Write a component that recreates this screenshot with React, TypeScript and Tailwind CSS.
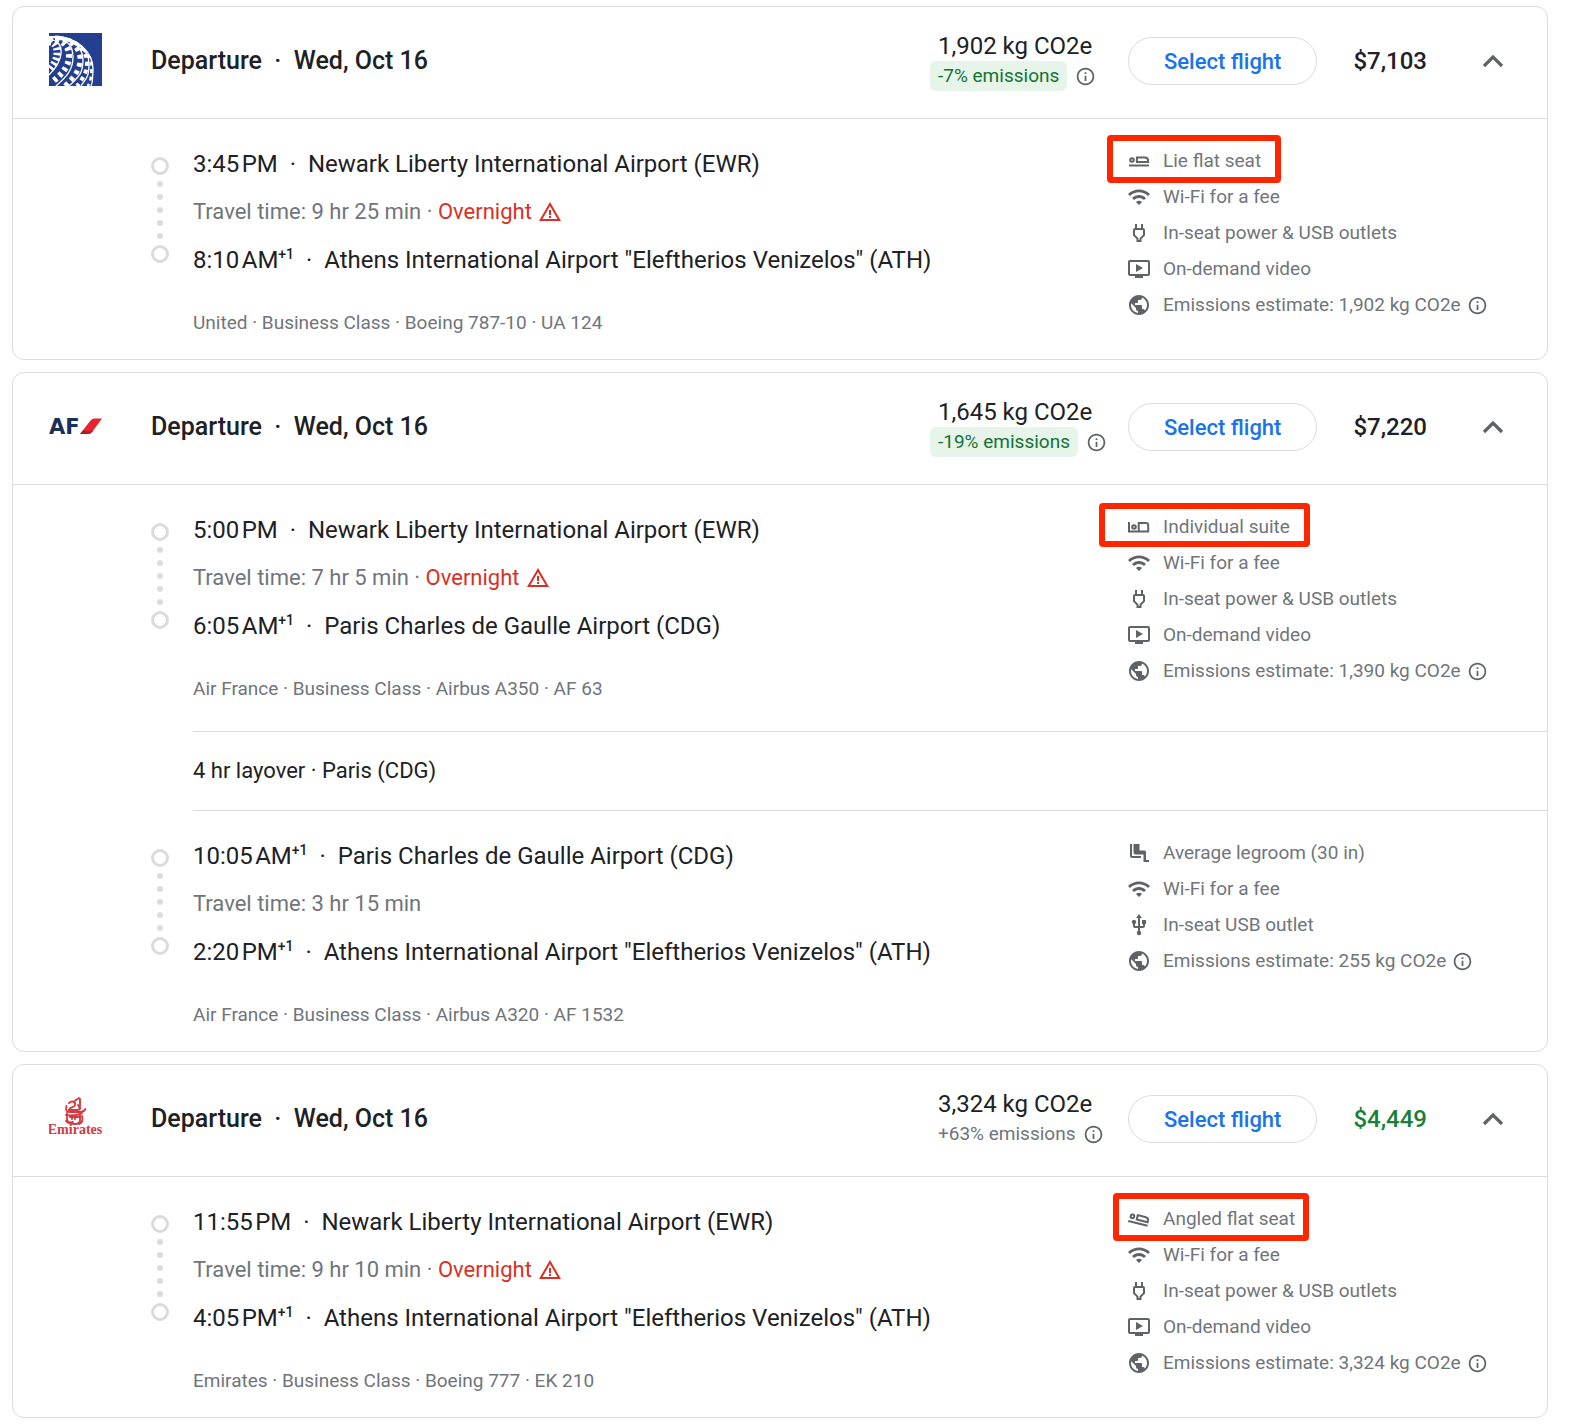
import type { ReactNode } from "react";
import {
  MdInfoOutline,
  MdOndemandVideo,
  MdOutlinePower,
  MdPublic,
  MdUsb,
  MdWarningAmber,
  MdWifi,
} from "react-icons/md";
import clsx from "clsx";

type AmenityKind = "lieFlat" | "suite" | "angled" | "legroom" | "wifi" | "power" | "usb" | "video" | "emissions";

interface Amenity {
  kind: AmenityKind;
  label: string;
  highlight?: string;
}

interface Stop {
  time: string;
  nextDay?: boolean;
  airport: string;
}

interface Leg {
  from: Stop;
  to: Stop;
  duration: string;
  overnight?: boolean;
  details: string[];
  amenities: Amenity[];
  layover?: string;
}

interface Flight {
  id: string;
  airline: string;
  logo: ReactNode;
  co2: string;
  delta: string;
  lowEmissions: boolean;
  price: string;
  deal?: boolean;
  legs: Leg[];
}

function UnitedLogo() {
  return (
    <svg viewBox="0 0 53 53" className="size-[53px]" role="img" aria-label="United">
      <rect width="53" height="53" fill="#243f8f" />
      <g fill="none" stroke="#fff">
        {/* meridians */}
        <g strokeWidth="1.3">
          <path d="M0 7C8 6 13 12 12 21S6 36 0 42" />
          <path d="M0 5C14 3 24 10 24 24S16 45 7 53" />
          <path d="M2 4C20 3 34 12 34 27S28 45 20 53" />
          <path d="M6 4C26 4 40 16 40 31S36 46 32 53" />
          <path d="M3 4C28 2 45 20 44 38S43 48 42 53" />
        </g>
        {/* blocks between the meridians */}
        <path d="M0 9C5 9 8 13 8 20S4 33 0 37" strokeWidth="7" strokeDasharray="2.500 2.500" />
        <path d="M0 6C12 5 20 12 20 23S12 42 3 49" strokeWidth="6" strokeDasharray="3.500 3.500" />
        <path d="M6 5C20 5 31 14 31 26S24 45 16 53" strokeWidth="5" strokeDasharray="4 4" />
        <path d="M10 5C26 6 38 17 38 29S33 46 28 53" strokeWidth="4" strokeDasharray="4 4" />
        <path d="M14 6C30 8 43 22 42.500 36S40 49 39 53" strokeWidth="2.500" strokeDasharray="4 3.500" />
      </g>
    </svg>
  );
}

function AirFranceLogo() {
  return (
    <svg viewBox="0 0 53 53" className="size-[53px]" role="img" aria-label="Air France">
      <text x="0" y="35" fontFamily="'DejaVu Sans', sans-serif" fontWeight="700" fontSize="21" fill="#1b2f5b">
        AF
      </text>
      <path d="M31 35 41.500 21.500Q43 19.500 45.500 19.500H53L43.500 32.500Q41.800 35 38.500 35Z" fill="#e8252f" />
      <path d="M31 35 34 31.200Q40 33.500 44.400 31.300L43.500 32.500Q41.800 35 38.500 35Z" fill="#a91f26" />
    </svg>
  );
}

function EmiratesLogo() {
  return (
    <svg viewBox="0 0 53 53" className="size-[53px]" role="img" aria-label="Emirates">
      <g fill="none" stroke="#d83a41" strokeWidth="1.900" strokeLinecap="round">
        <path d="M26 9.500c1.500-1 3-1 4-2.500M31 8v10M20 12c3-3 7-1 6 2s-6 2-6 5h9c2 0 2-2 0-5" />
        <path d="M17.500 15c-1 4 0 6 3 6h10c3 0 5-1 6-3" />
        <path d="M17 24c4 1 14 0 16-2M18 22v6c0 3 3 4 6 3M21 26h9M23 24v4M26 24v4M31 22v7c0 3-2 4-5 4s-7 0-9-3M33 25c1 4 0 7-3 8" />
      </g>
      <text
        x="26"
        y="43"
        textAnchor="middle"
        fontFamily="'Liberation Serif', serif"
        fontWeight="700"
        fontSize="14"
        fill="#d83a41"
      >
        Emirates
      </text>
    </svg>
  );
}

function SeatIcon({ kind }: { kind: AmenityKind }) {
  if (kind === "legroom") {
    return (
      <svg viewBox="0 0 24 24" className="size-6" fill="currentColor" aria-hidden="true">
        <path d="M3 3h2v12h9v2H5a2 2 0 0 1-2-2z" />
        <path d="M6.500 3h6v6.500h5a1.500 1.500 0 0 1 1.500 1.500v8h3v2h-5.500v-7.500h-8a2 2 0 0 1-2-2z" />
      </svg>
    );
  }
  if (kind === "suite") {
    return (
      <svg viewBox="0 0 24 24" className="size-6" fill="none" stroke="currentColor" strokeWidth="2" aria-hidden="true">
        <path d="M2 7v9.600h19.200V10q0-2-2-2h-7.500v8.500" />
        <circle cx="7" cy="12" r="1.800" />
      </svg>
    );
  }
  return (
    <svg viewBox="0 0 24 24" className="size-6" fill="none" stroke="currentColor" strokeWidth="2" aria-hidden="true">
      <g transform={kind === "angled" ? "rotate(14 12 12)" : undefined}>
        <path d="M2 16.500h20M9.900 13V8.500h7.600q3.600 0 3.600 3.200V13z" />
        <circle cx="5" cy="11" r="1.800" />
      </g>
    </svg>
  );
}

function AmenityIcon({ kind }: { kind: AmenityKind }) {
  switch (kind) {
    case "wifi":
      return <MdWifi className="size-6" />;
    case "power":
      return <MdOutlinePower className="size-6" />;
    case "usb":
      return <MdUsb className="size-6" />;
    case "video":
      return <MdOndemandVideo className="size-6" />;
    case "emissions":
      return <MdPublic className="size-6" />;
    default:
      return <SeatIcon kind={kind} />;
  }
}

const EWR = "Newark Liberty International Airport (EWR)";
const ATH = 'Athens International Airport "Eleftherios Venizelos" (ATH)';
const CDG = "Paris Charles de Gaulle Airport (CDG)";

const WIFI: Amenity = { kind: "wifi", label: "Wi-Fi for a fee" };
const POWER: Amenity = { kind: "power", label: "In-seat power & USB outlets" };
const VIDEO: Amenity = { kind: "video", label: "On-demand video" };

const FLIGHTS: Flight[] = [
  {
    id: "ua",
    airline: "United",
    logo: <UnitedLogo />,
    co2: "1,902 kg CO2e",
    delta: "-7% emissions",
    lowEmissions: true,
    price: "$7,103",
    legs: [
      {
        from: { time: "3:45 PM", airport: EWR },
        to: { time: "8:10 AM", nextDay: true, airport: ATH },
        duration: "9 hr 25 min",
        overnight: true,
        details: ["United", "Business Class", "Boeing 787-10", "UA 124"],
        amenities: [
          { kind: "lieFlat", label: "Lie flat seat", highlight: "-left-5 -right-5 -top-2 -bottom-1" },
          WIFI,
          POWER,
          VIDEO,
          { kind: "emissions", label: "Emissions estimate: 1,902 kg CO2e" },
        ],
      },
    ],
  },
  {
    id: "af",
    airline: "Air France",
    logo: <AirFranceLogo />,
    co2: "1,645 kg CO2e",
    delta: "-19% emissions",
    lowEmissions: true,
    price: "$7,220",
    legs: [
      {
        from: { time: "5:00 PM", airport: EWR },
        to: { time: "6:05 AM", nextDay: true, airport: CDG },
        duration: "7 hr 5 min",
        overnight: true,
        details: ["Air France", "Business Class", "Airbus A350", "AF 63"],
        layover: "4 hr layover · Paris (CDG)",
        amenities: [
          { kind: "suite", label: "Individual suite", highlight: "-left-7 -right-5 -top-1.5 -bottom-0.5" },
          WIFI,
          POWER,
          VIDEO,
          { kind: "emissions", label: "Emissions estimate: 1,390 kg CO2e" },
        ],
      },
      {
        from: { time: "10:05 AM", nextDay: true, airport: CDG },
        to: { time: "2:20 PM", nextDay: true, airport: ATH },
        duration: "3 hr 15 min",
        details: ["Air France", "Business Class", "Airbus A320", "AF 1532"],
        amenities: [
          { kind: "legroom", label: "Average legroom (30 in)" },
          WIFI,
          { kind: "usb", label: "In-seat USB outlet" },
          { kind: "emissions", label: "Emissions estimate: 255 kg CO2e" },
        ],
      },
    ],
  },
  {
    id: "ek",
    airline: "Emirates",
    logo: <EmiratesLogo />,
    co2: "3,324 kg CO2e",
    delta: "+63% emissions",
    lowEmissions: false,
    price: "$4,449",
    deal: true,
    legs: [
      {
        from: { time: "11:55 PM", airport: EWR },
        to: { time: "4:05 PM", nextDay: true, airport: ATH },
        duration: "9 hr 10 min",
        overnight: true,
        details: ["Emirates", "Business Class", "Boeing 777", "EK 210"],
        amenities: [
          { kind: "angled", label: "Angled flat seat", highlight: "-left-3.5 -right-3.5 -top-2 -bottom-1" },
          WIFI,
          POWER,
          VIDEO,
          { kind: "emissions", label: "Emissions estimate: 3,324 kg CO2e" },
        ],
      },
    ],
  },
];

function InfoButton({ label }: { label: string }) {
  return (
    <button type="button" aria-label={label} className="flex text-[#5f6368]">
      <MdInfoOutline className="size-[21px]" />
    </button>
  );
}

function StopLine({ stop }: { stop: Stop }) {
  return (
    <div className="text-2xl leading-9 whitespace-pre text-[#202124]">
      <span>{stop.time.replace(" ", "\u200a")}</span>
      {stop.nextDay && <span className="inline-block align-top text-sm leading-6 font-medium">+1</span>}
      <span>{"  ·  "}</span>
      <span>{stop.airport}</span>
    </div>
  );
}

function Timeline() {
  return (
    <div className="flex w-[18px] shrink-0 flex-col items-center gap-1.5 pt-[11px]" aria-hidden="true">
      <span className="size-[18px] rounded-full border-3 border-[#dadce0]" />
      <div className="flex flex-col gap-[7px]">
        {[0, 1, 2, 3, 4].map((dot) => (
          <span key={dot} className="size-1.5 rounded-full bg-[#dadce0]" />
        ))}
      </div>
      <span className="size-[18px] rounded-full border-3 border-[#dadce0]" />
    </div>
  );
}

function LegSection({ leg }: { leg: Leg }) {
  return (
    <>
      <div className={clsx("flex pl-[138px]", leg.layover ? "pb-[30px]" : "pb-6")}>
        <div className="flex min-w-0 flex-1 gap-6 pt-[27px]">
          <Timeline />
          <div className="min-w-0">
            <StopLine stop={leg.from} />
            <div className="my-3 flex items-center gap-1.5 text-[22px] leading-9 text-[#70757a]">
              <span>
                Travel time: {leg.duration}
                {leg.overnight && (
                  <>
                    {" · "}
                    <span className="text-[#d93025]">Overnight</span>
                  </>
                )}
              </span>
              {leg.overnight && <MdWarningAmber className="size-6 text-[#d93025]" />}
            </div>
            <StopLine stop={leg.to} />
            <p className="mt-[33px] text-[19px] leading-6 text-[#70757a]">{leg.details.join(" · ")}</p>
          </div>
        </div>
        <ul className="w-[420px] shrink-0 pt-6">
          {leg.amenities.map(({ kind, label, highlight }) => (
            <li key={label} className="flex h-9 items-center">
              <div className="relative flex h-9 items-center gap-3 text-[19px] text-[#70757a]">
                <span className="text-[#5f6368]">
                  <AmenityIcon kind={kind} />
                </span>
                {label}
                {highlight && (
                  <span className={clsx("pointer-events-none absolute rounded-sm border-6 border-[#ff2600]", highlight)} />
                )}
              </div>
              {kind === "emissions" && (
                <span className="ml-1.5">
                  <InfoButton label="About this emissions estimate" />
                </span>
              )}
            </li>
          ))}
        </ul>
      </div>
      {leg.layover && (
        <div className="ml-[180px] border-y border-[#dadce0] py-[21px] text-[22px] leading-9 text-[#202124]">
          {leg.layover}
        </div>
      )}
    </>
  );
}

function FlightCard({ flight }: { flight: Flight }) {
  return (
    <article className="rounded-xl border border-[#dadce0]">
      <header className="flex h-28 items-center border-b border-[#dadce0] px-9 pb-[3px]">
        <div className="shrink-0 pb-[3px]">{flight.logo}</div>
        <h2 className="ml-[49px] flex-1 text-[25px] font-medium whitespace-pre text-[#202124]">
          {"Departure  ·  Wed, Oct 16"}
        </h2>
        <div className="w-[190px] shrink-0">
          <div className="text-2xl leading-[30px] text-[#202124]">{flight.co2}</div>
          <div className="flex items-center gap-2 text-[19px] leading-[30px]">
            <span
              className={clsx(
                flight.lowEmissions ? "-ml-2 rounded-md bg-[#e6f4ea] px-2 text-[#137333]" : "text-[#70757a]"
              )}
            >
              {flight.delta}
            </span>
            <InfoButton label="About these emissions" />
          </div>
        </div>
        <button
          type="button"
          className="h-12 shrink-0 rounded-full border border-[#dadce0] px-[35px] text-[22px] font-medium text-[#1a73e8]"
        >
          Select flight
        </button>
        <div className={clsx("ml-9 text-2xl font-medium", flight.deal ? "text-[#188038]" : "text-[#202124]")}>
          {flight.price}
        </div>
        <button type="button" aria-label={`Collapse ${flight.airline} flight`} aria-expanded="true" className="ml-12 text-[#5f6368]">
          <svg viewBox="0 0 36 36" className="size-9" fill="none" stroke="currentColor" strokeWidth="3.200" aria-hidden="true">
            <path d="m9 23 9-9 9 9" />
          </svg>
        </button>
      </header>
      {flight.legs.map((leg) => (
        <LegSection key={leg.details.join()} leg={leg} />
      ))}
    </article>
  );
}

export default function App() {
  return (
    <main className="flex min-h-screen flex-col gap-3 bg-white pt-1.5 pr-[30px] pb-1.5 pl-3 font-[Roboto,'Liberation_Sans',sans-serif]">
      {FLIGHTS.map((flight) => (
        <FlightCard key={flight.id} flight={flight} />
      ))}
    </main>
  );
}
